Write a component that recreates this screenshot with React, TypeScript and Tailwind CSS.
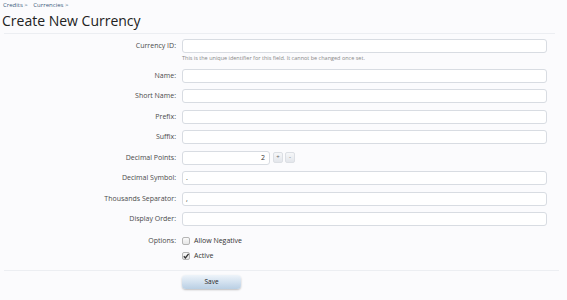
import React from "react";

const font = { fontFamily: '"Open Sans", "Noto Sans", "DejaVu Sans", sans-serif' };

function Row({ label, children }: { label: string; children?: React.ReactNode }) {
  return (
    <div className="flex items-start">
      <div className="w-[176px] text-right text-[7px] text-[#4a4a4a] leading-[14px] h-[14px]">{label}</div>
      <div className="ml-[6px] flex-1">{children}</div>
    </div>
  );
}

function Input({ value = "" }: { value?: string }) {
  return (
    <div className="w-[365px] h-[14px] rounded-[3px] border border-[#d8dce2] bg-white px-[3px] text-[7px] leading-[12px] text-[#333]">{value}</div>
  );
}

const btn =
  "w-[10px] h-[11px] rounded-[2px] border border-[#dcdfe4] bg-gradient-to-b from-[#f6f7f9] to-[#e3e6eb] text-[6px] leading-[9px] text-center text-[#666]";

export default function App() {
  return (
    <div className="w-[567px] h-[300px] bg-[#fbfbfd] overflow-hidden" style={font}>
      <div className="px-[3px] pt-[1px] text-[6px] leading-[9px] text-[#3c5b7c]">
        Credits &gt; <span className="ml-[4px]">Currencies &gt;</span>
      </div>
      <div className="px-[2px] pt-[1px] text-[14px] leading-[20px] text-[#222]">Create New Currency</div>
      <div className="mx-[4px] mt-[2px] h-[1px] bg-[#eceef2] w-[551px]" />
      <div className="mt-[5px] flex flex-col gap-[6.5px]">
        <div>
          <Row label="Currency ID:"><Input /></Row>
          <div className="ml-[182px] mt-[1px] h-[8px] text-[5.5px] leading-[8px] text-[#888]">
            This is the unique identifier for this field. It cannot be changed once set.
          </div>
        </div>
        <Row label="Name:"><Input /></Row>
        <Row label="Short Name:"><Input /></Row>
        <Row label="Prefix:"><Input /></Row>
        <Row label="Suffix:"><Input /></Row>
        <Row label="Decimal Points:">
          <div className="flex items-center gap-[2px]">
            <div className="w-[88px] h-[14px] rounded-[3px] border border-[#d8dce2] bg-white px-[4px] text-right text-[7px] leading-[12px] text-[#333]">2</div>
            <div className={`ml-[1px] ${btn}`}>+</div>
            <div className={btn}>-</div>
          </div>
        </Row>
        <Row label="Decimal Symbol:"><Input value="." /></Row>
        <Row label="Thousands Separator:"><Input value="," /></Row>
        <Row label="Display Order:"><Input /></Row>
      </div>
      <div className="mt-[8px] flex items-start">
        <div className="w-[176px] text-right text-[7px] text-[#4a4a4a] leading-[14px]">Options:</div>
        <div className="ml-[6px] flex flex-col gap-[1px] text-[7px] text-[#333] leading-[14px]">
          <div className="flex items-center gap-[4px]">
            <span className="inline-block w-[8px] h-[8px] border border-[#b5b5b5] rounded-[2px] bg-gradient-to-b from-[#fafafa] to-[#e6e6e6]" />
            Allow Negative
          </div>
          <div className="flex items-center gap-[4px]">
            <span className="relative inline-block w-[8px] h-[8px] border border-[#b5b5b5] rounded-[2px] bg-gradient-to-b from-[#fafafa] to-[#e6e6e6]">
              <svg viewBox="0 0 8 8" className="absolute left-[-1px] top-[-1px] w-[8px] h-[8px]">
                <path d="M1.8 4.2 L3.4 5.9 L6.6 1.8" fill="none" stroke="#333" strokeWidth="1.3" />
              </svg>
            </span>
            Active
          </div>
        </div>
      </div>
      <div className="mx-[4px] mt-[7px] h-[1px] bg-[#eceef2] w-[555px]" />
      <div className="ml-[182px] mt-[4px] w-[59px] h-[14px] rounded-[4px] bg-gradient-to-b from-[#eef4fa] to-[#b9cfe4] shadow-[0_1px_2px_rgba(0,0,0,0.25)] text-center text-[6.5px] leading-[14px] text-[#222]">
        Save
      </div>
    </div>
  );
}
